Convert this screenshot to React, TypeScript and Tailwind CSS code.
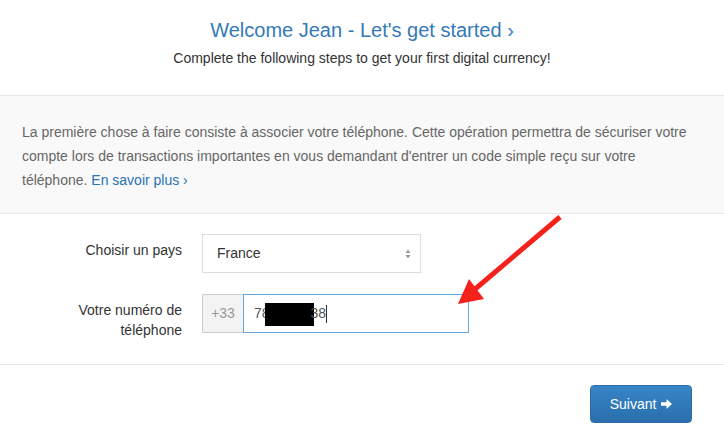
export default function App() {
  return (
    <div
      className="relative w-[724px] h-[434px] bg-white overflow-hidden text-[#333]"
      style={{ fontFamily: '"Liberation Sans", Arial, sans-serif' }}
    >
      {/* Header */}
      <div className="h-[95px] flex flex-col items-center pt-[18px]">
        <h1 className="text-[20px] leading-[24px] text-[#337ab7]">
          Welcome Jean - Let's get started ›
        </h1>
        <p className="mt-[7px] text-[14px] leading-[18px] text-[#333]">
          Complete the following steps to get your first digital currency!
        </p>
      </div>

      {/* Intro panel */}
      <div className="bg-[#f9f9f9] border-y border-[#e8e8e8] px-[22px] pt-[24px] pb-[20px] h-[119px]">
        <p className="text-[14px] leading-[24px] text-[#666]">
          La première chose à faire consiste à associer votre téléphone. Cette opération permettra de sécuriser votre
          compte lors de transactions importantes en vous demandant d'entrer un code simple reçu sur votre
          téléphone. <a className="text-[#2a72b5]">En savoir plus ›</a>
        </p>
      </div>

      {/* Form */}
      <div className="pt-[20px] pb-[24px] border-b border-[#e8e8e8] flex flex-col gap-[21px]">
        <div className="flex items-start gap-[20px]">
          <label className="w-[182px] pt-[6px] text-right text-[14px] leading-[20px]">Choisir un pays</label>
          <div className="w-[219px] h-[39px] border border-[#ddd] flex items-center justify-between pl-[14px] pr-[9px] text-[14px]">
            <span>France</span>
            <svg width="6" height="10" viewBox="0 0 6 10">
              <path d="M3 0.5 L5.5 4 H0.5 Z" fill="#999" />
              <path d="M3 9.5 L5.5 6 H0.5 Z" fill="#999" />
            </svg>
          </div>
        </div>
        <div className="flex items-start gap-[20px]">
          <label className="w-[182px] pt-[6px] text-right text-[14px] leading-[20px]">
            Votre numéro de
            <br />
            téléphone
          </label>
          <div className="flex h-[39px]">
            <div className="w-[41px] bg-[#f3f3f3] border border-[#ccc] border-r-0 rounded-l-[2px] flex items-center justify-center text-[14px] text-[#999]">
              +33
            </div>
            <div className="w-[226px] border border-[#66a6dc] flex items-center pl-[10px] text-[14px] text-[#555]">
              <span>78</span>
              <span className="inline-block w-[49px] h-[23px] bg-black ml-[-5px] mt-[2px]" />
              <span className="ml-[-3px]">38</span>
              <span className="inline-block w-px h-[18px] bg-[#333]" />
            </div>
          </div>
        </div>
      </div>

      {/* Footer */}
      <div className="flex justify-end pt-[20px] pr-[32px]">
        <button className="w-[102px] h-[38px] rounded-[4px] border border-[#2e6da4] bg-gradient-to-b from-[#3784c6] to-[#2a6fad] text-white text-[14px] flex items-center justify-center gap-[5px]">
          Suivant
          <svg width="11" height="10" viewBox="0 0 11 10">
            <path d="M0 3.2 H5.5 V0 L11 5 L5.5 10 V6.8 H0 Z" fill="#fff" />
          </svg>
        </button>
      </div>

      {/* Red annotation arrow */}
      <svg className="absolute left-0 top-0 pointer-events-none" width="724" height="434">
        <line x1="560" y1="217" x2="474" y2="290" stroke="#f4221b" strokeWidth="5" />
        <path d="M458 304 L469 279 L484 299 Z" fill="#f4221b" />
      </svg>
    </div>
  );
}
